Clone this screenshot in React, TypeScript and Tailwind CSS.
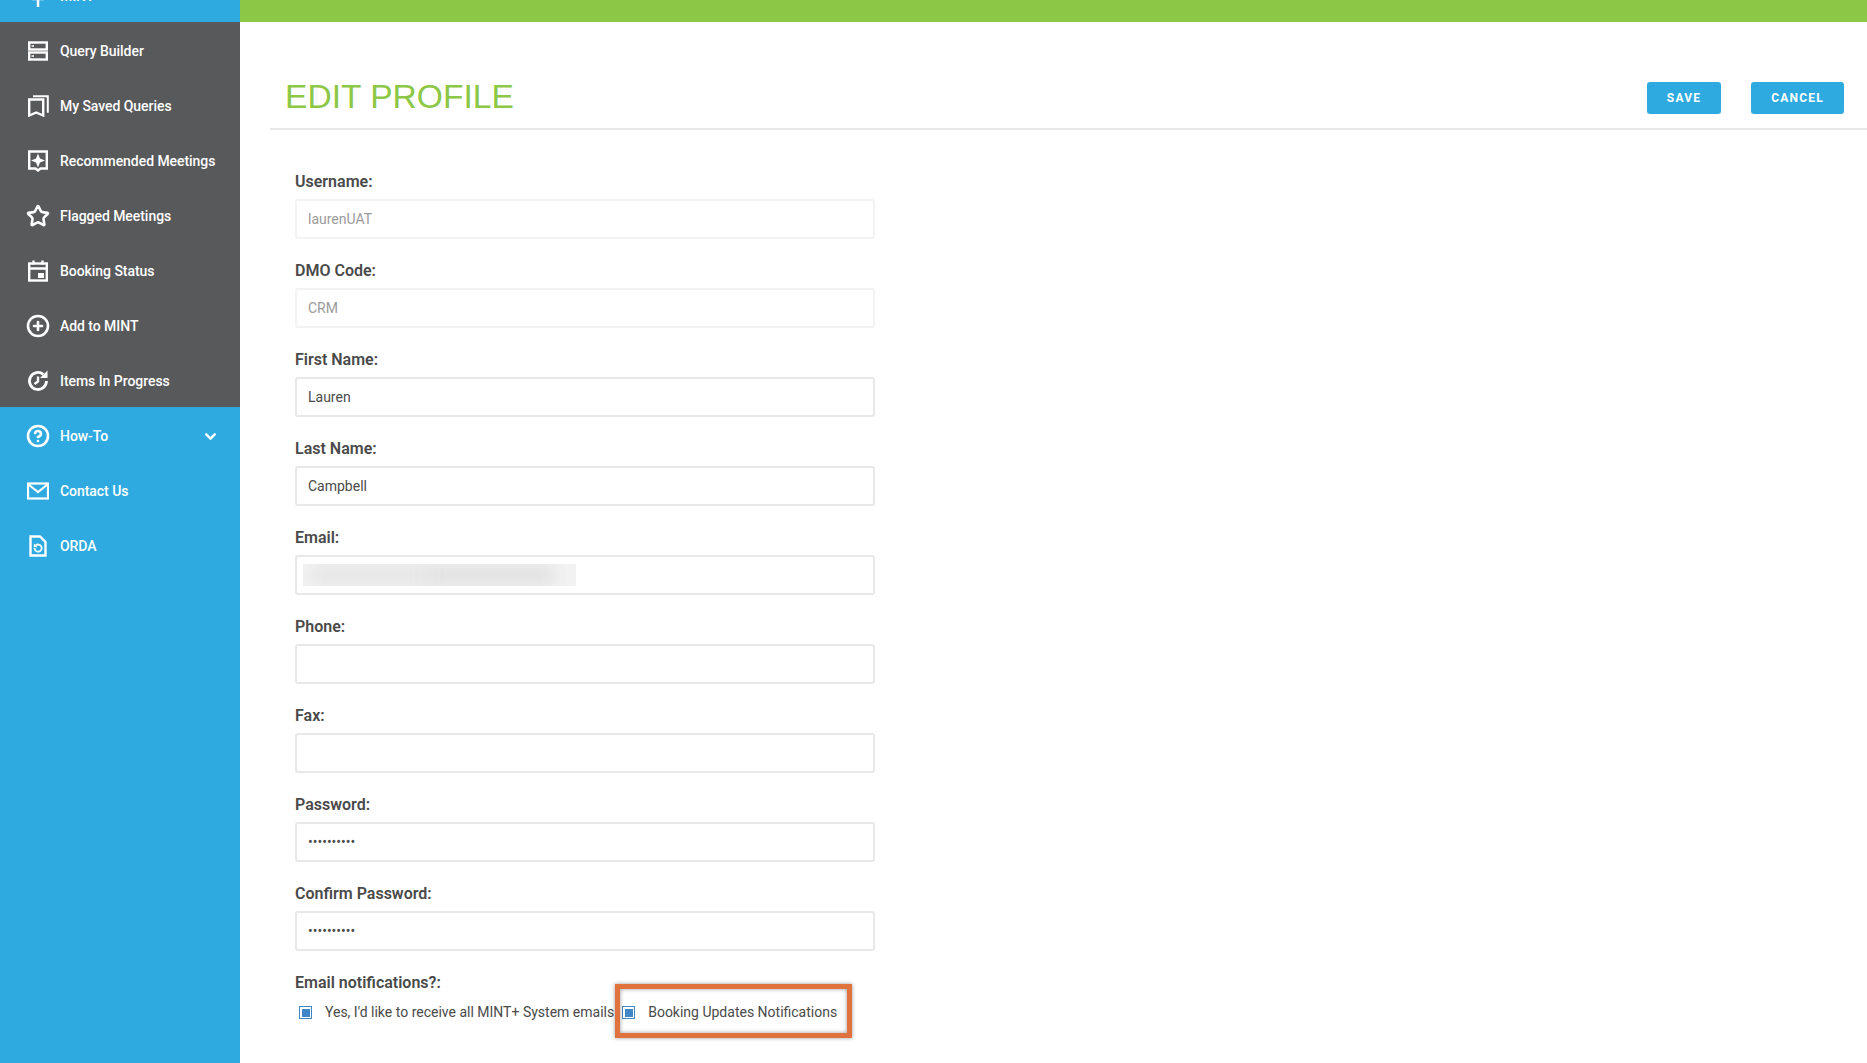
import React from 'react';
import { ChevronDown, CircleHelp, CirclePlus, Star } from 'lucide-react';

const iconClass = 'h-[22px] w-[22px] shrink-0';
const bigIconClass = '-mx-[1px] h-[24px] w-[24px] shrink-0';

const StemIcon = () => (
  <svg viewBox="0 0 22 22" className={iconClass} fill="none" stroke="currentColor" strokeWidth="2.5">
    <path d="M5 14h12M11 14v8" />
  </svg>
);

const QueryIcon = () => (
  <svg viewBox="0 0 22 22" className={iconClass} fill="none" stroke="currentColor" strokeWidth="2.4">
    <rect x="2.200" y="2.500" width="17.600" height="7" />
    <rect x="2.200" y="12.500" width="17.600" height="7" />
    <path d="M4.500 6h2.500M4.500 16h2.500" strokeWidth="1.500" />
  </svg>
);

const SavedIcon = () => (
  <svg viewBox="0 0 22 22" className={iconClass} fill="none" stroke="currentColor" strokeWidth="2.400">
    <path d="M2.200 4.500h14v16l-7-3-7 3z" />
    <path d="M6 1.200h14.800v16.500" strokeWidth="2" />
  </svg>
);

const RecommendedIcon = () => (
  <svg viewBox="0 0 22 22" className={iconClass} fill="none">
    <path d="M2.200 1.500h17.600v17h-6.300L11 20.500l-2.500-2H2.200z" stroke="currentColor" strokeWidth="2.400" />
    <path d="M11 3.500l2 5 5 2-5 2-2 5-2-5-5-2 5-2z" fill="currentColor" />
  </svg>
);

const BookingIcon = () => (
  <svg viewBox="0 0 22 22" className={iconClass} fill="none" stroke="currentColor" strokeWidth="2.400">
    <rect x="2.200" y="3.500" width="17.600" height="17" />
    <path d="M2.200 8.500h17.600M6.500 0.500v4M15.500 0.500v4" />
    <rect x="11" y="13" width="6" height="5" fill="currentColor" stroke="none" />
  </svg>
);

const ProgressIcon = () => (
  <svg viewBox="0 0 22 22" className={iconClass} fill="none" stroke="currentColor" strokeWidth="2.800">
    <path d="M19.500 11A8.500 8.500 0 1 1 16.500 4.500" />
    <path d="M11 6.500v5l-3.500 2.500" strokeWidth="2.400" />
    <path d="M20.500 0.500v7.500h-7.500z" fill="currentColor" stroke="none" />
  </svg>
);

const OrdaIcon = () => (
  <svg viewBox="0 0 22 22" className={iconClass} fill="none" stroke="currentColor" strokeWidth="2.400">
    <path d="M3.500 1.500h9.500l5.500 5.500v13.500h-15z" />
    <path d="M7.500 13a3.600 3.600 0 1 0 1.200-2.600" strokeWidth="1.800" />
    <path d="M6.800 8.500v3.700h3.700z" fill="currentColor" stroke="none" />
  </svg>
);

const MailIcon = () => (
  <svg viewBox="0 0 22 22" className={iconClass} fill="none" stroke="currentColor" strokeWidth="2.200">
    <rect x="1" y="3.500" width="20" height="15" />
    <path d="M1.500 4.500L11 12l9.500-7.500" />
  </svg>
);

const NavRow = ({ icon, label, chevron }: { icon: React.ReactNode; label: string; chevron?: boolean }) => (
  <div className="flex h-[55px] items-center pl-[27px] pr-[21px] pt-[3px] text-white">
    {icon}
    <span className="ml-[11px] flex-1 text-[14px] font-medium tracking-[-0.05px]">{label}</span>
    {chevron && <ChevronDown className="h-[17px] w-[17px]" strokeWidth={3.5} />}
  </div>
);

const Field = ({
  label,
  value,
  type = 'text',
  disabled,
  children,
}: {
  label: string;
  value?: string;
  type?: string;
  disabled?: boolean;
  children?: React.ReactNode;
}) => (
  <div className="mb-[20px]">
    <div className="h-[29px] text-[16px] font-semibold leading-[24px] text-[#4a4a4a]">{label}</div>
    <div className="relative">
      <input
        readOnly
        type={type}
        value={value ?? ''}
        className={`block h-[40px] w-full rounded-[3px] border-2 px-[11px] text-[14px] outline-none ${
          disabled ? 'border-[#f3f3f3] text-[#9b9b9b]' : 'border-[#e8e8e8] text-[#4a4a4a]'
        }`}
      />
      {children}
    </div>
  </div>
);

const Check = ({ label, className }: { label: string; className?: string }) => (
  <div className={`flex items-center ${className ?? ''}`}>
    <span className="flex h-[13px] w-[13px] items-center justify-center border-[1.5px] border-[#3f87c8] bg-white">
      <span className="h-[8px] w-[8px] bg-[#3f87c8]" />
    </span>
    <span className="ml-[13px] text-[14px] text-[#4a4a4a]">{label}</span>
  </div>
);

export default function App() {
  return (
    <div className="relative flex h-[1063px] overflow-hidden bg-white font-['Roboto',sans-serif]">
      <aside className="flex w-[240px] shrink-0 flex-col bg-[#2eaae1]">
        <div className="-mt-[33px]">
          <NavRow icon={<StemIcon />} label="MINT+" />
        </div>
        <div className="bg-[#58595b]">
          <NavRow icon={<QueryIcon />} label="Query Builder" />
          <NavRow icon={<SavedIcon />} label="My Saved Queries" />
          <NavRow icon={<RecommendedIcon />} label="Recommended Meetings" />
          <NavRow icon={<Star className={bigIconClass} strokeWidth={2.6} />} label="Flagged Meetings" />
          <NavRow icon={<BookingIcon />} label="Booking Status" />
          <NavRow icon={<CirclePlus className={bigIconClass} strokeWidth={2.6} />} label="Add to MINT" />
          <NavRow icon={<ProgressIcon />} label="Items In Progress" />
        </div>
        <NavRow icon={<CircleHelp className={bigIconClass} strokeWidth={2.6} />} label="How-To" chevron />
        <NavRow icon={<MailIcon />} label="Contact Us" />
        <NavRow icon={<OrdaIcon />} label="ORDA" />
      </aside>

      <main className="flex-1">
        <div className="h-[22px] bg-[#8cc746]" />
        <header className="ml-[30px] flex h-[108px] items-end justify-between border-b-2 border-[#e8e8e8] pb-[14px] pl-[15px] pr-[23px]">
          <h1 className="font-['Liberation_Sans',sans-serif] text-[33.6px] leading-[34px] text-[#8cc746]">EDIT PROFILE</h1>
          <div className="flex gap-[30px]">
            <button className="h-[32px] w-[74px] rounded-[3px] bg-[#2eaae1] text-[12px] font-bold tracking-[1.2px] text-white">SAVE</button>
            <button className="h-[32px] w-[93px] rounded-[3px] bg-[#2eaae1] text-[12px] font-bold tracking-[1.2px] text-white">CANCEL</button>
          </div>
        </header>

        <form className="ml-[55px] mt-[40px] w-[580px]">
          <Field label="Username:" value="laurenUAT" disabled />
          <Field label="DMO Code:" value="CRM" disabled />
          <Field label="First Name:" value="Lauren" />
          <Field label="Last Name:" value="Campbell" />
          <Field label="Email:">
            <div className="absolute left-[8px] top-[9px] h-[22px] w-[273px] overflow-hidden bg-[#f2f2f2]">
              <div className="ml-[8px] mt-[3px] h-[16px] w-[120px] bg-[#e4e4e4] blur-[8px]" />
              <div className="-mt-[16px] ml-[125px] h-[16px] w-[125px] bg-[#dedede] blur-[8px]" />
            </div>
          </Field>
          <Field label="Phone:" />
          <Field label="Fax:" />
          <Field label="Password:" value="1234567890" type="password" />
          <Field label="Confirm Password:" value="1234567890" type="password" />
          <div className="h-[25px] text-[16px] font-semibold leading-[24px] text-[#4a4a4a]">Email notifications?:</div>
          <div className="mt-[6px] flex pl-[4px]">
            <Check label="Yes, I'd like to receive all MINT+ System emails" />
            <Check label="Booking Updates Notifications" className="ml-[8px]" />
          </div>
        </form>
      </main>

      {/* annotation drawn over the page */}
      <div className="absolute left-[615px] top-[984px] h-[54px] w-[237px] border-[5px] border-[#e0723d] shadow-[0_0_4px_rgba(0,0,0,0.4),inset_0_0_4px_rgba(0,0,0,0.4)]" />
    </div>
  );
}
